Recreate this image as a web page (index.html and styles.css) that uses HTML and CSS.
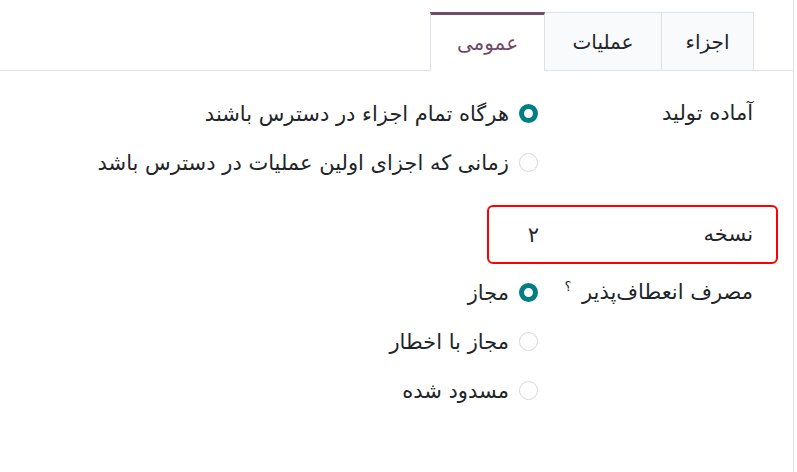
FILE: index.html
```html
<!DOCTYPE html>
<html lang="fa" dir="rtl">
<head>
  <meta charset="UTF-8">
  <title>تنظیمات تولید</title>
  <link rel="stylesheet" href="styles.css">
</head>
<body>
  <div class="sheet">
    <!-- Tabs -->
    <ul class="tabs">
      <li class="tab">اجزاء</li>
      <li class="tab">عملیات</li>
      <li class="tab active">عمومی</li>
    </ul>

    <div class="form-body">
      <!-- Ready to produce -->
      <div class="field">
        <div class="field-label">آماده تولید</div>
        <div class="radio-list">
          <label class="radio-option"><span class="radio checked"></span>هرگاه تمام اجزاء در دسترس باشند</label>
          <label class="radio-option"><span class="radio"></span>زمانی که اجزای اولین عملیات در دسترس باشد</label>
        </div>
      </div>

      <!-- Version -->
      <div class="field field-highlight">
        <div class="field-label">نسخه</div>
        <div class="field-value">۲</div>
      </div>

      <!-- Flexible consumption -->
      <div class="field">
        <div class="field-label">مصرف انعطاف‌پذیر <sup class="help">؟</sup></div>
        <div class="radio-list">
          <label class="radio-option"><span class="radio checked"></span>مجاز</label>
          <label class="radio-option"><span class="radio"></span>مجاز با اخطار</label>
          <label class="radio-option"><span class="radio"></span>مسدود شده</label>
        </div>
      </div>
    </div>
  </div>
</body>
</html>
```

FILE: styles.css
```css
:root {
  --text: #212529;
  --primary: #714b67;
  --teal: #017e84;
  --border: #dee2e6;
  --tab-bg: #f9fafb;
}

body {
  margin: 0;
  font-family: 'DejaVu Sans', 'Noto Sans', sans-serif;
  font-size: 21px;
  color: var(--text);
  background: #fff;
}

.sheet {
  width: 794px;
  height: 472px;
  margin-left: 0;
  margin-right: auto;
  border-right: 1px solid var(--border);
  box-sizing: border-box;
}

/* Tabs */
.tabs {
  display: flex;
  list-style: none;
  margin: 0;
  padding: 12px 39px 0 0;
  border-bottom: 1px solid var(--border);
}

.tab {
  height: 58px;
  display: flex;
  align-items: center;
  justify-content: center;
  box-sizing: border-box;
  background: var(--tab-bg);
  border: 1px solid var(--border);
  border-bottom: none;
  margin-left: -1px;
  font-size: 20px;
}

.tab:nth-child(1) { width: 93px; }
.tab:nth-child(2) { width: 118px; }
.tab:nth-child(3) { width: 115px; }

.tab.active {
  background: #fff;
  color: var(--primary);
  border-top: 3px solid var(--primary);
  margin-bottom: -1px;
  height: 59px;
}

/* Form */
.form-body {
  padding: 18px 40px 0 0;
}

.field {
  display: flex;
  align-items: flex-start;
}

.field-label {
  width: 215px;
  flex-shrink: 0;
  height: 49px;
  line-height: 49px;
}

.help {
  font-size: 13px;
  vertical-align: 8px;
  line-height: 0;
  margin-right: 4px;
}

.radio-list {
  display: flex;
  flex-direction: column;
}

.radio-option {
  display: flex;
  align-items: center;
  gap: 10px;
  height: 49px;
}

.radio {
  width: 19px;
  height: 19px;
  border-radius: 50%;
  border: 1px solid #d5d8dc;
  box-sizing: border-box;
  background: #fff;
}

.radio.checked {
  border: 5px solid var(--teal);
}

.field-highlight {
  width: 291px;
  height: 59px;
  box-sizing: border-box;
  margin: 18px -25px 4px 0;
  padding-right: 23px;
  border: 2px solid #f00;
  border-radius: 6px;
  align-items: center;
}

.field-highlight .field-label {
  width: 212px;
  line-height: 55px;
  height: 55px;
}

.field-value {
  padding-right: 2px;
}
```
